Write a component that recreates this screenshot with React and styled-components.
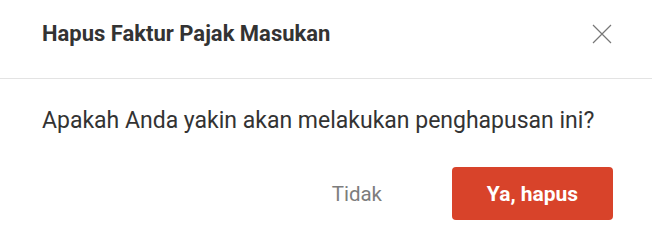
import React from 'react';
import styled, { createGlobalStyle } from 'styled-components';

const GlobalStyle = createGlobalStyle`
  * { box-sizing: border-box; }
  body {
    margin: 0;
    background: #ffffff;
    font-family: Roboto, "Liberation Sans", sans-serif;
  }
`;

const Dialog = styled.div`
  width: 652px;
  height: 243px;
  background: #ffffff;
  display: flex;
  flex-direction: column;
`;

const Header = styled.div`
  display: flex;
  align-items: center;
  justify-content: space-between;
  height: 79px;
  padding: 0 40px 11px 42px;
  border-bottom: 1px solid #e3e3e3;
`;

const Title = styled.h2`
  margin: 0;
  font-size: 22px;
  line-height: 28px;
  font-weight: 700;
  color: #333333;
`;

const CloseButton = styled.button`
  display: flex;
  padding: 0;
  border: none;
  background: none;
  cursor: pointer;
`;

const Body = styled.div`
  padding: 27px 40px 0 42px;
`;

const Message = styled.p`
  margin: 0;
  font-size: 23px;
  color: #333333;
  line-height: 30px;
`;

const Footer = styled.div`
  display: flex;
  justify-content: flex-end;
  align-items: center;
  gap: 40px;
  padding: 31px 39px 0 0;
`;

const Button = styled.button`
  height: 53px;
  padding: 0 30px;
  border-radius: 4px;
  border: none;
  font-family: inherit;
  font-size: ${(p) => (p.primary ? '21px' : '20.5px')};
  cursor: pointer;
  background: ${(p) => (p.primary ? '#d8432a' : 'transparent')};
  color: ${(p) => (p.primary ? '#ffffff' : '#7d7d7d')};
  font-weight: ${(p) => (p.primary ? 700 : 400)};
  width: ${(p) => (p.primary ? '161px' : 'auto')};
`;

const CloseIcon = () => (
  <svg width="20" height="20" viewBox="0 0 20 20" fill="none">
    <path d="M1 1L19 19M19 1L1 19" stroke="#777777" strokeWidth="1.2" />
  </svg>
);

const App = () => {
  return (
    <>
      <GlobalStyle />
      <Dialog>
        <Header>
          <Title>Hapus Faktur Pajak Masukan</Title>
          <CloseButton aria-label="Tutup">
            <CloseIcon />
          </CloseButton>
        </Header>
        <Body>
          <Message>Apakah Anda yakin akan melakukan penghapusan ini?</Message>
        </Body>
        <Footer>
          <Button>Tidak</Button>
          <Button primary>Ya, hapus</Button>
        </Footer>
      </Dialog>
    </>
  );
};

export default App;
